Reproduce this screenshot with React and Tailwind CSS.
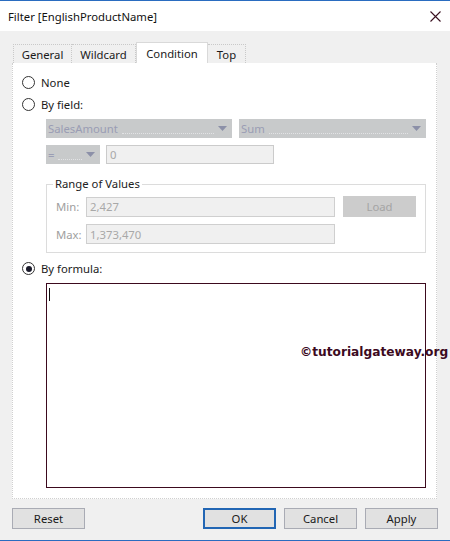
const Radio = ({ checked }) => (
  <span className="relative inline-flex h-[13px] w-[13px] shrink-0 items-center justify-center rounded-full border border-[#333] bg-white">
    {checked && <span className="h-[6px] w-[6px] rounded-full bg-[#1a1a2a]" />}
  </span>
)

const Arrow = () => (
  <svg width="9" height="5" viewBox="0 0 9 5" className="shrink-0">
    <path d="M0 0h9L4.5 5z" fill="#8c90a8" />
  </svg>
)

const Select = ({ label, className }) => (
  <div className={`flex h-[19px] items-center justify-between bg-[#c8cacb] pl-[2px] pr-[5px] ${className}`}>
    <span className="text-[#9a9db4]">{label}</span>
    <span className="mx-1 h-[11px] flex-1 border-b border-dotted border-[#e2e3e5]" />
    <Arrow />
  </div>
)

const Tab = ({ label, active, className }) => (
  <div
    className={`flex items-center justify-center border border-b-0 ${
      active
        ? 'h-[21px] border-[#d9d9d9] bg-white'
        : 'h-[19px] border-dotted border-[#c9c9c9] bg-[#f0f0f0]'
    } ${className}`}
  >
    {label}
  </div>
)

const Button = ({ label, primary, className }) => (
  <div
    className={`flex h-[21px] w-[73px] items-center justify-center bg-[#e1e1e1] text-[#1a1a1a] ${
      primary ? 'border-2 border-[#2266b4]' : 'border border-[#a9abb4]'
    } ${className}`}
  >
    {label}
  </div>
)

export default function App() {
  return (
    <div
      className="relative flex h-[541px] w-[450px] flex-col overflow-hidden border-y border-[#2a6cc0] bg-[#f0f0f0] text-[11.3px] leading-[15px] text-[#1a1a1a]"
      style={{ fontFamily: '"Noto Sans", "Liberation Sans", sans-serif' }}
    >
      {/* title bar */}
      <div className="flex h-[30px] shrink-0 items-center justify-between bg-white pl-[8px] pr-[9px]">
        <span className="text-[#111]">Filter [EnglishProductName]</span>
        <svg width="11" height="11" viewBox="0 0 11 11">
          <path d="M0.5 0.5l10 10M10.5 0.5l-10 10" stroke="#3a1020" strokeWidth="1.1" />
        </svg>
      </div>

      {/* tabs */}
      <div className="ml-[13px] mt-[11px] flex items-end">
        <Tab label="General" className="w-[59px]" />
        <Tab label="Wildcard" className="w-[64px] border-l-0" />
        <Tab label="Condition" active className="w-[72px]" />
        <Tab label="Top" className="w-[38px] border-l-0" />
      </div>

      {/* panel */}
      <div className="ml-[12px] flex h-[436px] w-[425px] flex-col border border-t-0 border-dotted border-[#d0d0d0] bg-white pl-[9px]">
        <label className="mt-[12px] flex items-center gap-[6px]">
          <Radio />
          <span>None</span>
        </label>
        <label className="mt-[7px] flex items-center gap-[6px]">
          <Radio />
          <span>By field:</span>
        </label>

        <div className="ml-[24px] mt-[7px] flex gap-[7px]">
          <Select label="SalesAmount" className="w-[186px]" />
          <Select label="Sum" className="w-[187px]" />
        </div>
        <div className="ml-[24px] mt-[7px] flex gap-[6px]">
          <Select label="=" className="w-[54px]" />
          <div className="flex h-[19px] w-[168px] items-center border border-[#cbcbcb] bg-[#f0f0f0] px-[3px] text-[#a8a8a8]">
            0
          </div>
        </div>

        <div className="relative ml-[24px] mt-[20px] h-[69px] w-[380px] border border-[#dcdcdc]">
          <span className="absolute -top-[9px] left-[6px] bg-white px-[2px] text-[#222]">Range of Values</span>
          <div className="ml-[9px] mt-[11px] flex items-center">
            <span className="w-[30px] text-[#a0a0a0]">Min:</span>
            <div className="flex h-[20px] w-[249px] items-center border border-[#cfcfcf] bg-[#f0f0f0] px-[3px] text-[#a8a8a8]">
              2,427
            </div>
            <div className="ml-[8px] flex h-[21px] w-[73px] items-center justify-center bg-[#cccccc] text-[#a4a4a4]">
              Load
            </div>
          </div>
          <div className="ml-[9px] mt-[7px] flex items-center">
            <span className="w-[30px] text-[#a0a0a0]">Max:</span>
            <div className="flex h-[20px] w-[249px] items-center border border-[#cfcfcf] bg-[#f0f0f0] px-[3px] text-[#a8a8a8]">
              1,373,470
            </div>
          </div>
        </div>

        <label className="mt-[8px] flex items-center gap-[6px]">
          <Radio checked />
          <span>By formula:</span>
        </label>

        <div className="ml-[24px] mt-[7px] h-[205px] w-[380px] border border-[#3c0a1e] bg-white pl-[2px] pt-[4px]">
          <div className="h-[13px] w-[1px] bg-[#111]" />
        </div>
      </div>

      {/* buttons */}
      <div className="ml-[12px] mt-[9px] flex w-[426px]">
        <Button label="Reset" />
        <div className="flex-1" />
        <Button label="OK" primary />
        <Button label="Cancel" className="ml-[8px]" />
        <Button label="Apply" className="ml-[8px]" />
      </div>

      {/* watermark */}
      <span
        className="absolute left-[300px] top-[344px] whitespace-nowrap text-[12.2px] font-bold text-[#3c0a1e]"
        style={{ fontFamily: '"DejaVu Sans", "Liberation Sans", sans-serif' }}
      >
        ©tutorialgateway.org
      </span>
    </div>
  )
}
